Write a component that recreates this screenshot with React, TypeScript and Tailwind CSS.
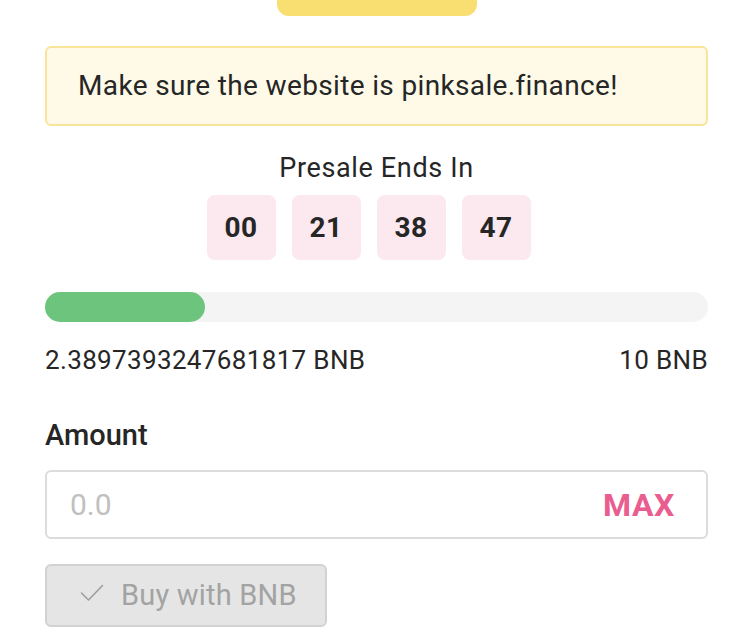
const countdown = ["00", "21", "38", "47"];

export default function App() {
  return (
    <div
      className="w-[756px] h-[634px] overflow-hidden bg-white text-[#262626]"
      style={{ fontFamily: "Roboto, 'Liberation Sans', sans-serif" }}
    >
      <div className="pl-[45px] pr-[48px]">
        <div className="flex justify-center">
          <div className="w-[200px] h-[16px] rounded-b-[12px] bg-[#f9df72]" />
        </div>

        <div className="mt-[30px] h-[80px] flex items-center px-[31px] rounded-[6px] border-2 border-[#f8e59a] bg-[#fefae7] text-[28px] tracking-[0.35px] text-[#262626]">
          Make sure the website is pinksale.finance!
        </div>

        <div className="mt-[25px] text-center text-[27px] tracking-[0.65px] leading-[34px]">
          Presale Ends In
        </div>
        <div className="mt-[10px] flex justify-center gap-[16px] pr-[16px]">
          {countdown.map((n, i) => (
            <div
              key={i}
              className="w-[69px] h-[65px] rounded-[8px] bg-[#fbe9ef] flex items-center justify-center text-[28px] font-bold tracking-[0.5px]"
            >
              {n}
            </div>
          ))}
        </div>

        <div className="mt-[32px] h-[30px] rounded-full bg-[#f4f4f4]">
          <div className="h-full w-[160px] rounded-full bg-[#6dc57d]" />
        </div>
        <div className="mt-[24px] flex justify-between text-[26px] tracking-[0.35px] leading-[28px]">
          <span>2.3897393247681817 BNB</span>
          <span>10 BNB</span>
        </div>

        <div className="mt-[43px] text-[29px] font-medium leading-[36px]">Amount</div>
        <div className="mt-[17px] h-[69px] rounded-[6px] border-2 border-[#dcdcdc] flex items-center pl-[23px] pr-[31px]">
          <span className="flex-1 text-[30px] text-[#c0c0c0]">0.0</span>
          <span className="text-[32px] font-bold tracking-[0.6px] text-[#e95d8f]">MAX</span>
        </div>

        <div className="mt-[25px] w-[282px] h-[63px] rounded-[6px] border-2 border-[#d2d2d2] bg-[#e5e5e5] flex items-center pl-[33px] text-[#a3a3a3]">
          <svg width="24" height="18" viewBox="0 0 24 18" fill="none" className="mb-[6px]">
            <polyline
              points="1.5,9 8.5,16 22.5,1.5"
              stroke="#9e9e9e"
              strokeWidth="1.6"
              strokeLinecap="round"
              strokeLinejoin="round"
            />
          </svg>
          <span className="ml-[17px] text-[29px] tracking-[0.2px]">Buy with BNB</span>
        </div>
      </div>
    </div>
  );
}
